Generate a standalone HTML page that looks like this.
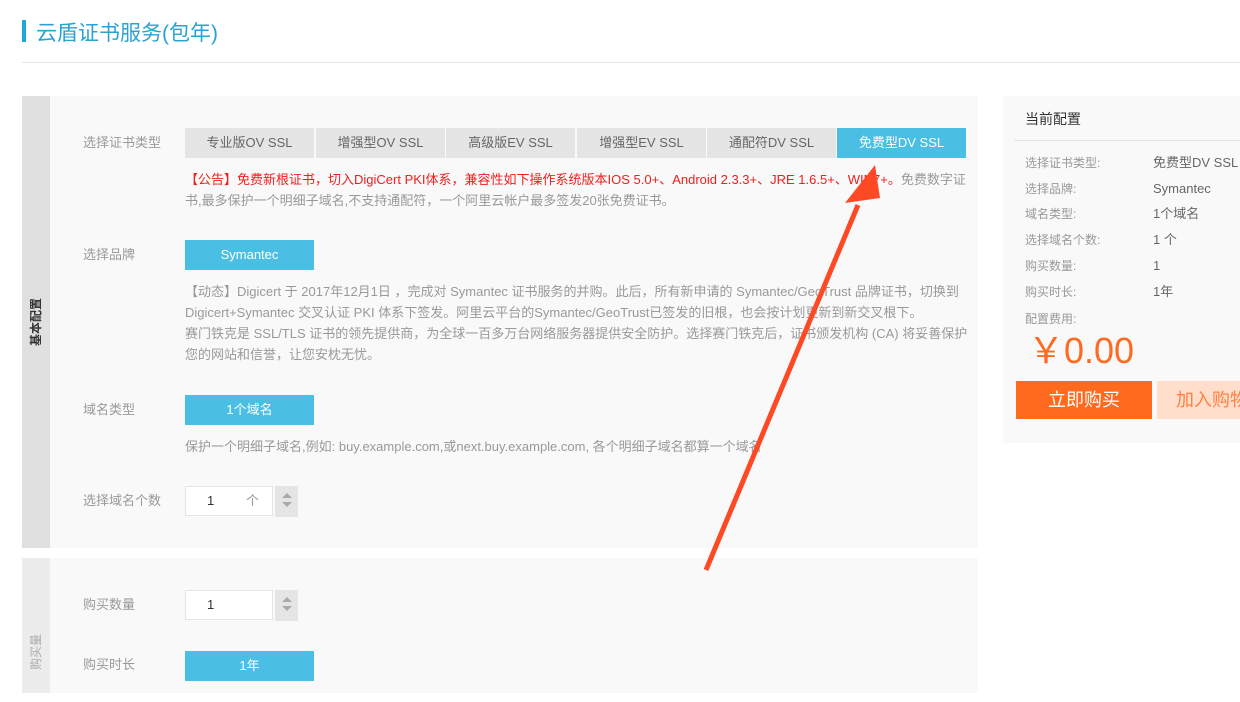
<!DOCTYPE html>
<html><head><meta charset="utf-8"><style>
*{margin:0;padding:0;box-sizing:border-box}
body{width:1240px;height:693px;overflow:hidden;background:#fff;font-family:"Liberation Sans","Noto Sans CJK SC",sans-serif;position:relative;color:#999}
.a{position:absolute}
.lbl{font-size:13px;color:#999;line-height:16px}
.tab{position:absolute;top:128px;height:30px;width:129px;background:#e5e5e5;color:#666;font-size:13px;text-align:center;line-height:30px}
.blue{background:#4bbfe3;color:#fff}
.txt{font-size:13px;line-height:21px;color:#999}
.rl{position:absolute;left:1025px;font-size:12px;color:#999;line-height:14px}
.rv{position:absolute;left:1153px;font-size:13px;color:#666;line-height:14px}
.vt{position:absolute;width:100px;text-align:center;font-size:12px;transform:rotate(-90deg);line-height:14px}
</style></head><body>
<div class="a" style="left:22px;top:20px;width:4px;height:22px;background:#1da8d8"></div>
<div class="a" style="left:36px;top:17px;font-size:21px;color:#2aa3d2">云盾证书服务(包年)</div>
<div class="a" style="left:22px;top:62px;width:1218px;height:1px;background:#e5e5e5"></div>

<div class="a" style="left:22px;top:96px;width:956px;height:452px;background:#f9f9f9"></div>
<div class="a" style="left:22px;top:96px;width:28px;height:452px;background:#e0e0e0"></div>
<div class="vt" style="left:-14px;top:315px;color:#333;font-weight:bold">基本配置</div>

<div class="a lbl" style="left:83px;top:135px">选择证书类型</div>
<div class="tab" style="left:185px">专业版OV SSL</div>
<div class="tab" style="left:316px">增强型OV SSL</div>
<div class="tab" style="left:446px">高级版EV SSL</div>
<div class="tab" style="left:577px">增强型EV SSL</div>
<div class="tab" style="left:707px">通配符DV SSL</div>
<div class="tab blue" style="left:837px">免费型DV SSL</div>
<div class="a txt" style="left:185px;top:169px;width:784px"><span style="color:#f21d1d">【公告】免费新根证书，切入DigiCert PKI体系，兼容性如下操作系统版本IOS 5.0+、Android 2.3.3+、JRE 1.6.5+、WIN7+。</span>免费数字证书,最多保护一个明细子域名,不支持通配符，一个阿里云帐户最多签发20张免费证书。</div>

<div class="a lbl" style="left:83px;top:247px">选择品牌</div>
<div class="tab blue" style="left:185px;top:240px">Symantec</div>
<div class="a txt" style="left:185px;top:281px;width:784px">【动态】Digicert 于 2017年12月1日 ，完成对 Symantec 证书服务的并购。此后，所有新申请的 Symantec/GeoTrust 品牌证书，切换到Digicert+Symantec 交叉认证 PKI 体系下签发。阿里云平台的Symantec/GeoTrust已签发的旧根，也会按计划更新到新交叉根下。<br>赛门铁克是 SSL/TLS 证书的领先提供商，为全球一百多万台网络服务器提供安全防护。选择赛门铁克后，证书颁发机构 (CA) 将妥善保护您的网站和信誉，让您安枕无忧。</div>

<div class="a lbl" style="left:83px;top:402px">域名类型</div>
<div class="tab blue" style="left:185px;top:395px">1个域名</div>
<div class="a txt" style="left:185px;top:436px">保护一个明细子域名,例如: buy.example.com,或next.buy.example.com, 各个明细子域名都算一个域名</div>

<div class="a lbl" style="left:83px;top:493px">选择域名个数</div>
<div class="a" style="left:185px;top:486px;width:88px;height:30px;background:#fff;border:1px solid #e5e5e5;font-size:13px;color:#333;line-height:28px;padding-left:21px">1<span style="position:absolute;left:60px;color:#999">个</span></div>
<div class="a" style="left:275px;top:486px;width:23px;height:31px;background:#e5e5e5"><div style="margin:7px auto 0;width:0;border:5px solid transparent;border-bottom:5px solid #aaa;border-top:0"></div><div style="margin:4px auto 0;width:0;border:5px solid transparent;border-top:5px solid #aaa;border-bottom:0"></div></div>

<div class="a" style="left:22px;top:558px;width:956px;height:135px;background:#f9f9f9"></div>
<div class="a" style="left:22px;top:558px;width:28px;height:135px;background:#ececec"></div>
<div class="vt" style="left:-14px;top:645px;color:#aaa">购买量</div>
<div class="a lbl" style="left:83px;top:597px">购买数量</div>
<div class="a" style="left:185px;top:590px;width:88px;height:30px;background:#fff;border:1px solid #e5e5e5;font-size:13px;color:#333;line-height:28px;padding-left:21px">1</div>
<div class="a" style="left:275px;top:590px;width:23px;height:31px;background:#e5e5e5"><div style="margin:7px auto 0;width:0;border:5px solid transparent;border-bottom:5px solid #aaa;border-top:0"></div><div style="margin:4px auto 0;width:0;border:5px solid transparent;border-top:5px solid #aaa;border-bottom:0"></div></div>
<div class="a lbl" style="left:83px;top:657px">购买时长</div>
<div class="tab blue" style="left:185px;top:651px">1年</div>

<div class="a" style="left:1003px;top:96px;width:237px;height:347px;background:#f9f9f9"></div>
<div class="a" style="left:1025px;top:109px;font-size:14px;color:#333">当前配置</div>
<div class="a" style="left:1014px;top:140px;width:226px;height:1px;background:#e5e5e5"></div>
<div class="rl" style="top:156px">选择证书类型:</div><div class="rv" style="top:156px">免费型DV SSL</div>
<div class="rl" style="top:182px">选择品牌:</div><div class="rv" style="top:182px">Symantec</div>
<div class="rl" style="top:207px">域名类型:</div><div class="rv" style="top:207px">1个域名</div>
<div class="rl" style="top:233px">选择域名个数:</div><div class="rv" style="top:233px">1 个</div>
<div class="rl" style="top:259px">购买数量:</div><div class="rv" style="top:259px">1</div>
<div class="rl" style="top:285px">购买时长:</div><div class="rv" style="top:285px">1年</div>
<div class="rl" style="top:312px">配置费用:</div>
<div class="a" style="left:1028px;top:331px;font-size:36px;line-height:40px;color:#ff6a22">￥0.00</div>
<div class="a" style="left:1016px;top:381px;width:136px;height:38px;background:#ff6a1f;color:#fff;font-size:18px;text-align:center;line-height:38px">立即购买</div>
<div class="a" style="left:1157px;top:381px;width:100px;height:38px;background:#ffdfcc;color:#ff8040;font-size:18px;line-height:38px;padding-left:19px;white-space:nowrap">加入购物车</div>

<svg class="a" style="left:0;top:0" width="1240" height="693"><line x1="706" y1="570" x2="858" y2="205" stroke="#fe4a24" stroke-width="5"/><polygon points="875,165 845,203 880,198" fill="#fe4a24"/></svg>
</body></html>
